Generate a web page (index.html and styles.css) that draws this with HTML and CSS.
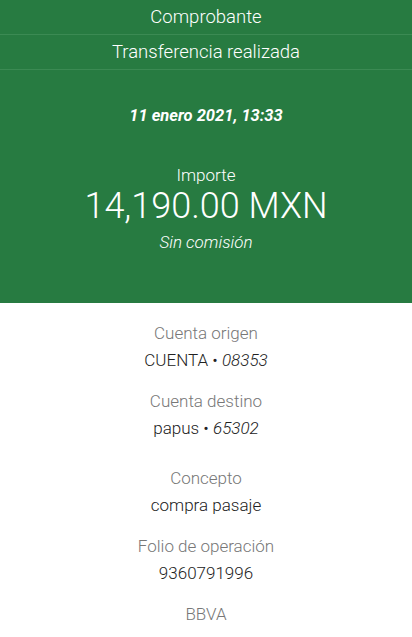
FILE: index.html
```html
<!DOCTYPE html>
<html lang="es">
<head>
    <meta charset="UTF-8">
    <meta name="viewport" content="width=device-width, initial-scale=1.0">
    <title>Comprobante</title>
    <link rel="stylesheet" href="styles.css">
</head>
<body>
    <div class="cabecera">
        <div class="barra">Comprobante</div>
        <div class="barra">Transferencia realizada</div>
        <div class="resumen">
            <p class="fecha">11 enero 2021, 13:33</p>
            <p class="importe-titulo">Importe</p>
            <p class="importe">14,190.00 MXN</p>
            <p class="comision">Sin comisión</p>
        </div>
    </div>

    <div class="detalle">
        <div class="campo">
            <p class="etiqueta">Cuenta origen</p>
            <p class="valor">CUENTA &bull; <em>08353</em></p>
        </div>
        <div class="campo">
            <p class="etiqueta">Cuenta destino</p>
            <p class="valor">papus &bull; <em>65302</em></p>
        </div>
        <div class="campo concepto">
            <p class="etiqueta">Concepto</p>
            <p class="valor">compra pasaje</p>
        </div>
        <div class="campo">
            <p class="etiqueta">Folio de operación</p>
            <p class="valor">9360791996</p>
        </div>
        <div class="campo">
            <p class="etiqueta">BBVA</p>
        </div>
    </div>
</body>
</html>
```

FILE: styles.css
```css
body {
    margin: 0;
    font-family: Roboto, "Liberation Sans", sans-serif;
    background-color: #fff;
    text-align: center;
}

p {
    margin: 0;
}

.cabecera {
    background-color: #277b41;
    color: #fff;
    height: 303px;
}

.barra {
    height: 35px;
    line-height: 35px;
    font-size: 18.5px;
    font-weight: 300;
    border-bottom: 1px solid #3b8a53;
    box-sizing: border-box;
}

.resumen {
    padding-top: 34px;
}

.fecha {
    font-size: 16.5px;
    font-weight: bold;
    font-style: italic;
    line-height: 24px;
}

.importe-titulo {
    margin-top: 35px;
    font-size: 17px;
    font-weight: 300;
    line-height: 24px;
}

.importe {
    font-size: 36px;
    font-weight: 300;
    line-height: 38px;
}

.comision {
    margin-top: 5px;
    font-size: 17px;
    font-style: italic;
    font-weight: 300;
    line-height: 24px;
}

.detalle {
    padding-top: 17px;
}

.campo {
    margin-bottom: 15px;
}

.concepto {
    padding-top: 9px;
}

.etiqueta {
    color: #777;
    font-size: 17px;
    font-weight: 300;
    line-height: 27px;
}

.valor {
    color: #222;
    font-size: 17px;
    font-weight: 300;
    line-height: 26px;
}

.valor em {
    font-style: italic;
}
```
